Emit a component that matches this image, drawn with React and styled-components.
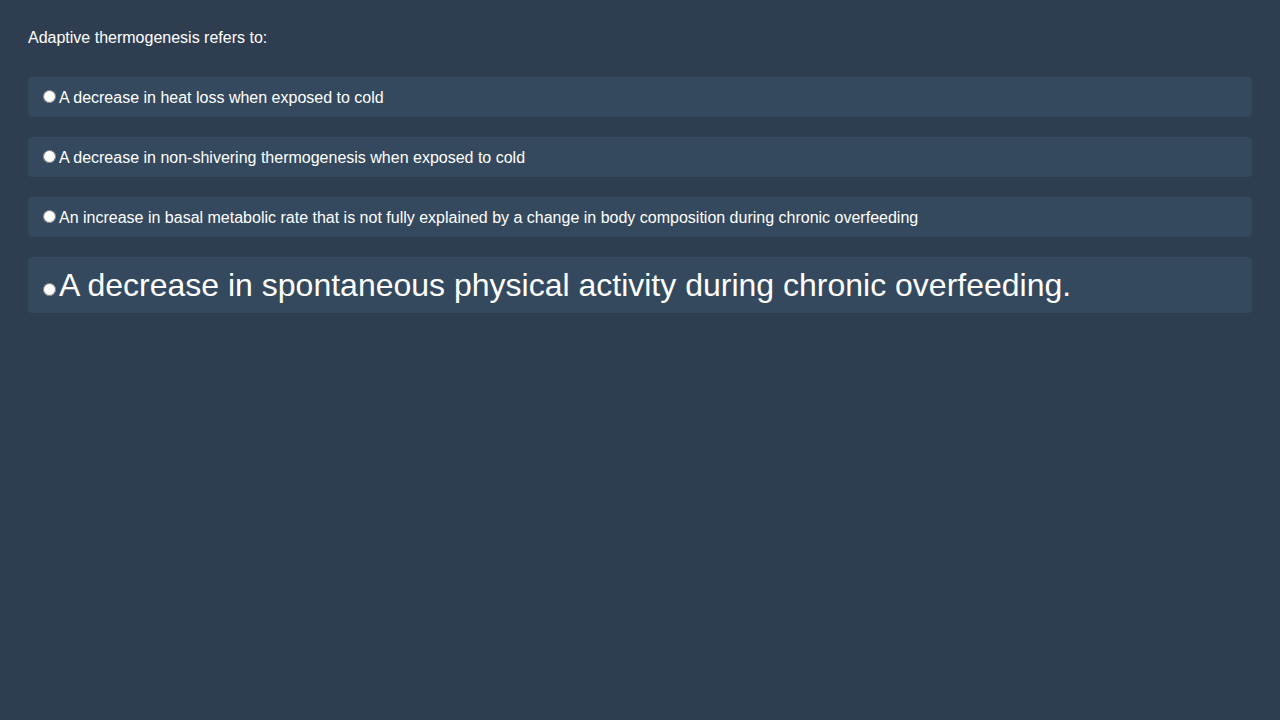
import React from 'react';
import styled, { createGlobalStyle } from 'styled-components';

const GlobalStyle = createGlobalStyle`
  html, body {
    margin: 0;
    padding: 0;
    background-color: #2e3e50;
  }
  body {
    font-family: 'Liberation Sans', Arial, sans-serif;
    color: #ffffff;
  }
`;

const options = [
  { text: 'A decrease in heat loss when exposed to cold' },
  { text: 'A decrease in non-shivering thermogenesis when exposed to cold' },
  {
    text:
      'An increase in basal metabolic rate that is not fully explained by a change in body composition during chronic overfeeding',
  },
  { text: 'A decrease in spontaneous physical activity during chronic overfeeding.', big: true },
];

export default function App() {
  return (
    <Page>
      <GlobalStyle />
      <Question>Adaptive thermogenesis refers to:</Question>
      <OptionList>
        {options.map((option, i) => (
          <Option key={i} $big={option.big}>
            <input type="radio" name="answer" />
            {option.text}
          </Option>
        ))}
      </OptionList>
    </Page>
  );
}

const Page = styled.div`
  min-height: 720px;
  box-sizing: border-box;
  padding: 28px;
  background-color: #2e3e50;
`;

const Question = styled.p`
  margin: 0 0 29px;
  font-size: 16px;
  line-height: 20px;
`;

const OptionList = styled.div`
  display: flex;
  flex-direction: column;
  gap: 20px;
`;

const Option = styled.label`
  display: block;
  padding: ${props => (props.$big ? '10px' : '11px 10px 9px')};
  border-radius: 4px;
  background-color: #34495e;
  font-size: ${props => (props.$big ? '32px' : '16px')};
  line-height: ${props => (props.$big ? '36px' : '20px')};
  input {
    margin: ${props => (props.$big ? '2px' : '1px')} 3px 0 5px;
  }
`;
